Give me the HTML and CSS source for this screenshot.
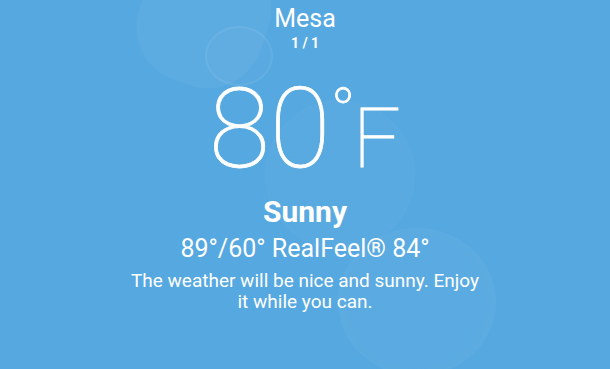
FILE: index.html
```html
<!DOCTYPE html>
<html>
<head>
<meta charset="utf-8">
<link rel="stylesheet" href="styles.css">
</head>
<body>
<div class="screen">
  <div class="flare hex"></div>
  <div class="flare ring"></div>
  <div class="flare mid"></div>
  <div class="flare big"></div>
  <div class="content">
    <div class="city">Mesa</div>
    <div class="pager">1 / 1</div>
    <div class="temp"><span class="num">80</span><span class="unit"><span class="deg">°</span>F</span></div>
    <div class="cond">Sunny</div>
    <div class="range">89°/60° RealFeel® 84°</div>
    <div class="desc">The weather will be nice and sunny. Enjoy<br>it while you can.</div>
  </div>
</div>
</body>
</html>
```

FILE: styles.css
```css
html, body {
  margin: 0;
  padding: 0;
}
body {
  width: 610px;
  height: 369px;
  overflow: hidden;
  font-family: Roboto, "Liberation Sans", sans-serif;
  color: #fff;
}
.screen {
  position: relative;
  width: 610px;
  height: 369px;
  background: #55a8e0;
  overflow: hidden;
}
.flare {
  position: absolute;
  border-radius: 50%;
}
.hex {
  left: 140px;
  top: -50px;
  width: 128px;
  height: 136px;
  border-radius: 42%;
  background: rgba(255,255,255,0.045);
  transform: rotate(20deg);
}
.ring {
  left: 205px;
  top: 26px;
  width: 64px;
  height: 56px;
  border: 2px solid rgba(255,255,255,0.06);
  background: rgba(255,255,255,0.03);
}
.mid {
  left: 265px;
  top: 100px;
  width: 150px;
  height: 150px;
  background: radial-gradient(circle, rgba(255,255,255,0.02) 60%, rgba(255,255,255,0.06) 100%);
}
.big {
  left: 338px;
  top: 228px;
  width: 158px;
  height: 148px;
  background: radial-gradient(circle, rgba(255,255,255,0.03) 60%, rgba(255,255,255,0.07) 100%);
}
.content {
  position: relative;
  display: flex;
  flex-direction: column;
  align-items: center;
  text-align: center;
  padding-top: 4px;
}
.city {
  font-size: 25px;
  line-height: 30px;
}
.pager {
  font-size: 14px;
  font-weight: 700;
  line-height: 18px;
}
.temp {
  margin-top: 22px;
  display: flex;
  align-items: baseline;
  height: 111px;
  font-weight: 100;
  -webkit-text-stroke: 0.8px #fff;
}
.num {
  font-size: 111px;
  line-height: 111px;
}
.unit {
  font-size: 84px;
  line-height: 84px;
}
.deg {
  position: relative;
  top: -31px;
  font-size: 66px;
  margin-right: -3px;
}
.cond {
  margin-top: 10px;
  font-size: 30px;
  font-weight: 700;
  line-height: 34px;
}
.range {
  margin-top: 5px;
  font-size: 25px;
  line-height: 30px;
}
.desc {
  margin-top: 6px;
  font-size: 19px;
  line-height: 21px;
}
```
